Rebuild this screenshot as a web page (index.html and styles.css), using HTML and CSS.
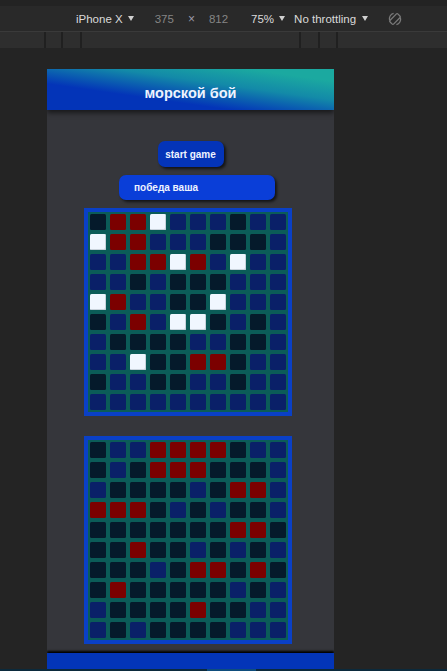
FILE: index.html
```html
<!DOCTYPE html>
<html lang="ru">
<head>
<meta charset="utf-8">
<title>морской бой</title>
<link rel="stylesheet" href="styles.css">
</head>
<body>
<div class="devtools">
  <div class="topband"></div>
  <div class="toolbar">
    <span class="tb-device">iPhone X</span>
    <svg class="tri tri-1" width="6" height="5" viewBox="0 0 6 5"><path d="M0 0H6L3 5Z" fill="#d0d0d0"/></svg>
    <span class="tb-dim tb-w">375</span>
    <span class="tb-x">×</span>
    <span class="tb-dim tb-h">812</span>
    <span class="tb-zoom">75%</span>
    <svg class="tri tri-2" width="6" height="5" viewBox="0 0 6 5"><path d="M0 0H6L3 5Z" fill="#d0d0d0"/></svg>
    <span class="tb-throttle">No throttling</span>
    <svg class="tri tri-3" width="6" height="5" viewBox="0 0 6 5"><path d="M0 0H6L3 5Z" fill="#d0d0d0"/></svg>
    <svg class="rotate" width="14" height="14" viewBox="0 0 14 14" fill="none" stroke="#7a7a7a" stroke-width="1.3">
      <path d="M1.6 8.4A5.6 5.6 0 0 1 5.6 1.4"/>
      <path d="M12.4 5.6A5.6 5.6 0 0 1 8.4 12.6"/>
      <rect x="4.4" y="1.4" width="5.2" height="11.2" rx="1.3" transform="rotate(45 7 7)"/>
    </svg>
  </div>
  <div class="ruler">
    <div class="seg s1"></div><div class="seg s2"></div><div class="seg s3"></div><div class="seg s4"></div><div class="seg s5"></div><div class="seg s6"></div><div class="seg s7"></div>
  </div>
  <div class="stage">
    <div class="phone">
      <header class="app-header">морской бой</header>
      <main class="app-main">
        <button class="btn-start">start game</button>
        <div class="status">победа ваша</div>
        <div class="board">
          <i class="d"></i><i class="r"></i><i class="r"></i><i class="w"></i><i class="n"></i><i class="n"></i><i class="n"></i><i class="d"></i><i class="n"></i><i class="n"></i>
          <i class="w"></i><i class="r"></i><i class="r"></i><i class="n"></i><i class="n"></i><i class="n"></i><i class="d"></i><i class="d"></i><i class="d"></i><i class="n"></i>
          <i class="n"></i><i class="n"></i><i class="r"></i><i class="r"></i><i class="w"></i><i class="r"></i><i class="n"></i><i class="w"></i><i class="n"></i><i class="n"></i>
          <i class="n"></i><i class="n"></i><i class="d"></i><i class="n"></i><i class="d"></i><i class="d"></i><i class="d"></i><i class="n"></i><i class="n"></i><i class="n"></i>
          <i class="w"></i><i class="r"></i><i class="n"></i><i class="n"></i><i class="d"></i><i class="d"></i><i class="w"></i><i class="n"></i><i class="n"></i><i class="n"></i>
          <i class="d"></i><i class="n"></i><i class="r"></i><i class="n"></i><i class="w"></i><i class="w"></i><i class="d"></i><i class="n"></i><i class="d"></i><i class="n"></i>
          <i class="n"></i><i class="d"></i><i class="d"></i><i class="d"></i><i class="d"></i><i class="n"></i><i class="n"></i><i class="d"></i><i class="d"></i><i class="n"></i>
          <i class="n"></i><i class="n"></i><i class="w"></i><i class="d"></i><i class="d"></i><i class="r"></i><i class="r"></i><i class="d"></i><i class="n"></i><i class="n"></i>
          <i class="d"></i><i class="n"></i><i class="n"></i><i class="d"></i><i class="d"></i><i class="n"></i><i class="n"></i><i class="d"></i><i class="n"></i><i class="n"></i>
          <i class="n"></i><i class="n"></i><i class="n"></i><i class="n"></i><i class="n"></i><i class="n"></i><i class="n"></i><i class="n"></i><i class="n"></i><i class="n"></i>
        </div>
        <div class="board board-2">
          <i class="d"></i><i class="n"></i><i class="n"></i><i class="r"></i><i class="r"></i><i class="r"></i><i class="r"></i><i class="d"></i><i class="n"></i><i class="n"></i>
          <i class="d"></i><i class="n"></i><i class="d"></i><i class="r"></i><i class="r"></i><i class="r"></i><i class="d"></i><i class="d"></i><i class="d"></i><i class="n"></i>
          <i class="n"></i><i class="d"></i><i class="d"></i><i class="d"></i><i class="d"></i><i class="n"></i><i class="d"></i><i class="r"></i><i class="r"></i><i class="n"></i>
          <i class="r"></i><i class="r"></i><i class="r"></i><i class="d"></i><i class="n"></i><i class="d"></i><i class="n"></i><i class="d"></i><i class="d"></i><i class="n"></i>
          <i class="d"></i><i class="d"></i><i class="d"></i><i class="d"></i><i class="d"></i><i class="d"></i><i class="d"></i><i class="r"></i><i class="r"></i><i class="d"></i>
          <i class="d"></i><i class="d"></i><i class="r"></i><i class="d"></i><i class="d"></i><i class="n"></i><i class="d"></i><i class="n"></i><i class="d"></i><i class="n"></i>
          <i class="d"></i><i class="d"></i><i class="d"></i><i class="n"></i><i class="d"></i><i class="r"></i><i class="r"></i><i class="d"></i><i class="r"></i><i class="d"></i>
          <i class="d"></i><i class="r"></i><i class="d"></i><i class="d"></i><i class="d"></i><i class="d"></i><i class="d"></i><i class="n"></i><i class="d"></i><i class="n"></i>
          <i class="n"></i><i class="d"></i><i class="d"></i><i class="d"></i><i class="d"></i><i class="r"></i><i class="d"></i><i class="d"></i><i class="n"></i><i class="n"></i>
          <i class="n"></i><i class="d"></i><i class="n"></i><i class="d"></i><i class="d"></i><i class="d"></i><i class="d"></i><i class="n"></i><i class="n"></i><i class="n"></i>
        </div>
        <footer class="app-footer"></footer>
      </main>
    </div>
  </div>
  <div class="scrollbar"><div class="thumb"></div></div>
</div>
</body>
</html>
```

FILE: styles.css
```css
html, body {
  margin: 0;
  padding: 0;
  background: #242424;
}
body {
  width: 447px;
  height: 671px;
  overflow: hidden;
  font-family: "Liberation Sans", Arial, sans-serif;
}
.devtools {
  display: flex;
  flex-direction: column;
  height: 671px;
}
.topband {
  height: 6px;
  background: #232323;
}
.toolbar {
  height: 25px;
  background: #292929;
  display: flex;
  align-items: center;
  font-size: 11.5px;
  color: #dadada;
  padding-top: 1px;
  box-sizing: border-box;
  white-space: nowrap;
}
.tb-device { margin-left: 76px; }
.tri { display: block; margin-top: -1px; }
.tri-1 { margin-left: 5px; }
.tb-dim { color: #858585; }
.tb-w { margin-left: 21px; }
.tb-x { color: #9a9aa8; margin-left: 14px; font-size: 12px; }
.tb-h { margin-left: 14px; }
.tb-zoom { margin-left: 23px; }
.tri-2 { margin-left: 5px; }
.tb-throttle { margin-left: 9px; }
.tri-3 { margin-left: 6px; }
.rotate { display: block; margin-left: 20px; }
.ruler {
  height: 17px;
  border-top: 1px solid #3a3a3a;
  box-sizing: border-box;
  display: flex;
  background: #2e2e2e;
}
.seg { height: 100%; border-right: 2px solid #202020; }
.s1 { width: 44px; }
.s2 { width: 15px; }
.s3 { width: 17px; }
.s4 { width: 217px; }
.s5 { width: 17px; }
.s6 { width: 16px; }
.s7 { flex: 1; border-right: 0; }
.stage {
  flex: 1;
  padding: 21px 0 0 47px;
  overflow: hidden;
}
.phone {
  width: 287px;
  height: 600px;
  overflow: hidden;
  background: #35363b;
  display: flex;
  flex-direction: column;
}
.app-header {
  height: 41px;
  flex: none;
  box-sizing: border-box;
  padding-top: 14px;
  line-height: 20px;
  text-align: center;
  font-weight: bold;
  font-size: 14.5px;
  color: #eef3ff;
  background: linear-gradient(to top right, #0334b8 32%, #138aa8 62%, #1ba9a0 85%);
  box-shadow: 0 3px 5px rgba(0, 0, 0, 0.55);
  position: relative;
  z-index: 1;
}
.app-main {
  display: flex;
  flex-direction: column;
  align-items: flex-start;
  padding-top: 31px;
}
.btn-start {
  align-self: center;
  width: 66px;
  height: 26px;
  border: 0;
  border-radius: 7px;
  background: #0434b8;
  color: #eef3ff;
  font-family: "Liberation Sans", Arial, sans-serif;
  font-weight: bold;
  font-size: 10px;
  padding: 0;
  box-shadow: 2px 2px 3px rgba(0, 0, 0, 0.65);
}
.status {
  margin: 8px 0 0 72px;
  width: 156px;
  height: 25px;
  box-sizing: border-box;
  padding-left: 15px;
  line-height: 25px;
  border-radius: 7px;
  background: #0a3ed8;
  color: #eef3ff;
  font-weight: bold;
  font-size: 10px;
  box-shadow: 2px 2px 3px rgba(0, 0, 0, 0.65);
}
.board {
  margin: 8px 0 0 37px;
  width: 208px;
  box-sizing: border-box;
  border: 4px solid #0a40c6;
  background: #0b5c58;
  padding: 2px;
  display: grid;
  grid-template-columns: repeat(10, 16px);
  grid-auto-rows: 16px;
  gap: 4px;
}
.board-2 { margin-top: 20px; }
.board i {
  display: block;
  border-radius: 1.5px;
}
.board .d { background: #051a2b; }
.board .n { background: #0a2068; }
.board .r { background: #7b0000; }
.board .w { background: #f0f7ff; box-shadow: inset -1px -1px 0 #c9d3dc; }
.app-footer {
  align-self: stretch;
  margin-top: 9px;
  height: 30px;
  background: #0335b8;
  box-shadow: 0 -2px 2px #000;
}
.scrollbar {
  height: 2px;
  background: #0b2a3c;
  display: flex;
}
.thumb {
  margin-left: 207px;
  width: 49px;
  background: #0e4d7c;
}
```
